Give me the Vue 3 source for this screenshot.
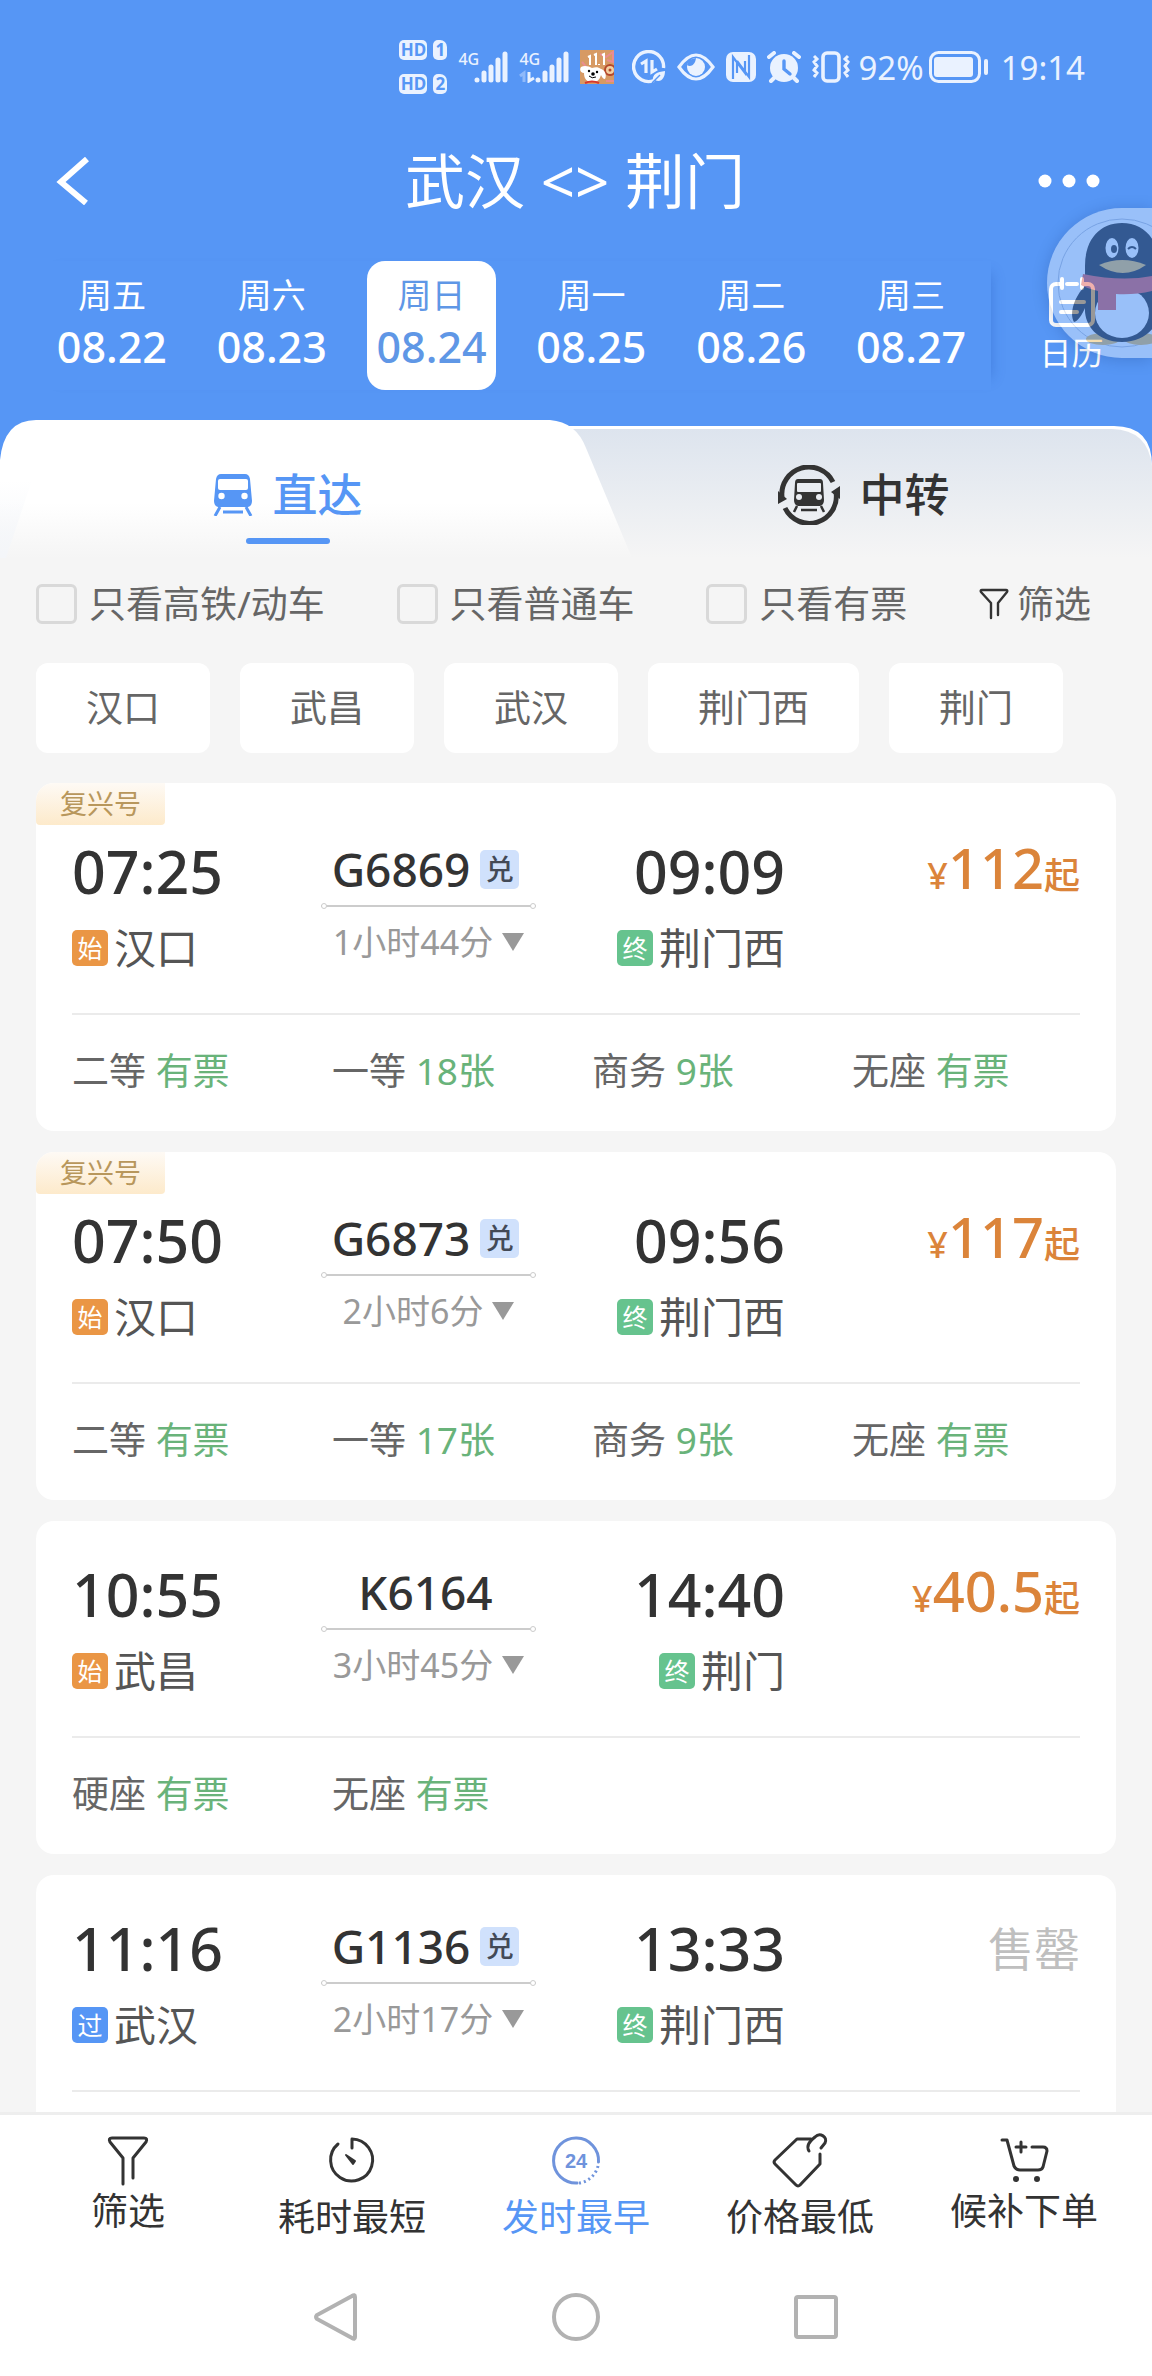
<template>
  <div class="page">
    <header class="header">
      <div class="status">
        <div class="status-group">
          <div class="hd-list">
            <div v-for="n in 2" :key="n" class="hd-row">
              <span class="hd">HD</span><span class="sim">{{ n }}</span>
            </div>
          </div>
          <div v-for="n in 2" :key="n" class="signal">
            <span class="net">4G</span>
            <svg width="50" height="32" viewBox="0 0 50 32" aria-hidden="true">
              <g stroke="#eaf2ff" stroke-width="5" stroke-linecap="round">
                <path d="M19 29v.1M26 22v7M33 16v13M40 9v20M47 3v26" />
              </g>
              <path v-if="n === 2" d="M1 25l4-3v9" fill="none" stroke="#8fb9fa" stroke-width="3" />
              <path v-if="n === 2" d="M10 21v9l5-3" fill="none" stroke="#eaf2ff" stroke-width="3" />
            </svg>
          </div>
          <svg width="34" height="34" viewBox="0 0 34 34" aria-hidden="true">
            <rect width="34" height="34" fill="#d79a64" />
            <path d="M20 4l6 3 7-5v10l-6-2M2 12l5 6M26 31h8" stroke="#ea8c8f" stroke-width="2" fill="none" />
            <path d="M8 7l2-1v9M14 5l2-1v11M19 14v1M22 5l2-1v11" stroke="#fff" stroke-width="2" fill="none" />
            <circle cx="30" cy="20" r="5" fill="#f3d0a0" stroke="#b5482c" stroke-width="2" />
            <circle cx="30" cy="20" r="1.5" fill="#b5482c" />
            <path d="M1 17c3-2 8-1 11 1 4-1 6-1 9 1 4 1 6 6 4 10-2 0-3-2-4-4-2 6-4 7-9 7s-8-3-8-9c-3 0-5-3-3-6z" fill="#fff" />
            <circle cx="9" cy="21" r="1.2" /><circle cx="17" cy="22" r="1.2" />
            <circle cx="13" cy="24" r="1.8" /><path d="M9 26q3 3 7 1" stroke="#000" fill="none" />
            <path d="M5 33q7-3 14 0" stroke="#d8352c" stroke-width="2" fill="none" />
          </svg>
        </div>

        <div class="status-group modes">
          <svg width="34" height="34" viewBox="0 0 34 34" aria-hidden="true" fill="none" stroke="#eaf2ff">
            <path d="M22 30.5A15 15 0 1 1 31.5 18" stroke-width="3.4" />
            <path d="M9 14l5-3v12M20 10v12l5-3" stroke-width="3.2" />
            <path d="M21 31c-1-7 4-9 12-10 0 7-4 12-10 9z" fill="#eaf2ff" stroke="none" />
            <path d="M20 33l8-8" stroke="#5696f5" stroke-width="1.5" />
          </svg>
          <svg width="38" height="28" viewBox="0 0 38 28" aria-hidden="true">
            <path d="M2 14Q19-10 36 14Q19 38 2 14z" fill="none" stroke="#eaf2ff" stroke-width="3.2" />
            <circle cx="19" cy="14" r="9" fill="#eaf2ff" />
            <path d="M10 12c3 2 8 1 9-7l-7 2z" fill="#5696f5" />
          </svg>
          <svg width="30" height="30" viewBox="0 0 30 30" aria-hidden="true">
            <rect width="30" height="30" rx="7" fill="#eaf2ff" />
            <path d="M7 27V5l12 16V9M11 9v12M23 3v22L11 9" fill="none" stroke="#5696f5" stroke-width="2.2" />
          </svg>
          <svg width="34" height="32" viewBox="0 0 34 32" aria-hidden="true">
            <circle cx="17" cy="17" r="14" fill="#eaf2ff" />
            <path d="M2 6l5-4M32 6l-5-4M7 27l-3 3M27 27l3 3" stroke="#eaf2ff" stroke-width="4" stroke-linecap="round" />
            <path d="M17 10v8l6 5" fill="none" stroke="#5696f5" stroke-width="3.4" stroke-linecap="round" />
          </svg>
          <svg width="38" height="32" viewBox="0 0 38 32" aria-hidden="true" fill="none" stroke="#eaf2ff">
            <rect x="11" y="2" width="16" height="28" rx="4" stroke-width="3.6" />
            <path d="M2 5l3 3-3 3 3 4-3 4 3 3-3 4M36 5l-3 3 3 3-3 4 3 4-3 3 3 4" stroke-width="3" />
          </svg>
        </div>

        <div class="status-group power">
          <span>92%</span>
          <svg width="60" height="32" viewBox="0 0 60 32" aria-hidden="true">
            <rect x="1.5" y="1.5" width="49" height="29" rx="8" fill="none" stroke="#eaf2ff" stroke-width="3" />
            <rect x="5" y="6" width="39" height="20" rx="3" fill="#eaf2ff" />
            <path d="M57 10v12" stroke="#eaf2ff" stroke-width="4" stroke-linecap="round" />
          </svg>
        </div>
        <span class="clock">19:14</span>
      </div>

      <div class="titlebar">
        <button class="icon-btn" aria-label="返回">
          <svg width="34" height="48" viewBox="0 0 34 48"><path d="M31 2L5 25l25 21" fill="none" stroke="#fff" stroke-width="6" /></svg>
        </button>
        <h1>武汉 &lt;&gt; 荆门</h1>
        <button class="icon-btn more" aria-label="更多">
          <svg width="62" height="14" viewBox="0 0 62 14" fill="#fff"><circle cx="7" cy="7" r="6.5" /><circle cx="31" cy="7" r="6.5" /><circle cx="55" cy="7" r="6.5" /></svg>
        </button>
      </div>

      <div class="dates">
        <div class="days">
          <button v-for="d in days" :key="d.date" class="day" :class="{ active: d.date === currentDate }" @click="currentDate = d.date">
            <span class="week">{{ d.week }}</span>
            <span class="date">{{ d.date }}</span>
          </button>
        </div>
        <button class="calendar">
          <svg width="46" height="50" viewBox="0 0 46 50" fill="none" stroke="#fff" stroke-linecap="round">
            <path d="M12 7H7a5 5 0 0 0-5 5v31a5 5 0 0 0 5 5h32a5 5 0 0 0 5-5V12a5 5 0 0 0-5-5h-5M18 7h10" stroke-width="4" />
            <path d="M13 2v9M33 2v9M12 25h23M12 35h16" stroke-width="4" />
          </svg>
          <span>日历</span>
        </button>
      </div>

      <svg class="floating" width="105" height="150" viewBox="0 0 105 150" aria-hidden="true">
        <path d="M105 0H75a75 75 0 0 0 0 150h30z" fill="#fff" />
        <circle cx="75" cy="75" r="64" fill="none" stroke="#a9b6cc" />
        <ellipse cx="56" cy="131" rx="17" ry="6" fill="#e7af3a" />
        <ellipse cx="94" cy="131" rx="17" ry="6" fill="#e7af3a" />
        <path d="M38 58C38 30 54 15 75 15s37 15 37 43v22c8 30-8 54-37 54-26 0-38-18-37-34-3 7-7 13-11 14-5-8 0-25 11-36z" />
        <ellipse cx="75" cy="105" rx="27" ry="25" fill="#fff" />
        <ellipse cx="65" cy="40" rx="6.5" ry="10" fill="#fff" />
        <ellipse cx="85" cy="40" rx="6.5" ry="10" fill="#fff" />
        <ellipse cx="67" cy="41" rx="3" ry="4" />
        <path d="M81 41q4-4 8 0" fill="none" stroke="#000" stroke-width="2" />
        <path d="M52 57q23-10 47 0-23 16-47 0z" fill="#e7af3a" />
        <path d="M36 66q39 8 69 2v15q-17 4-36 3v16H51V83q-12-3-17-6z" fill="#da3c34" />
      </svg>
    </header>

    <div class="tabs">
      <svg class="tabs-bg" viewBox="0 0 1152 138" preserveAspectRatio="none" aria-hidden="true">
        <defs>
          <linearGradient id="tabOff" x1="0" y1="0" x2="0" y2="1">
            <stop offset="0" stop-color="#dde4ee" />
            <stop offset="1" stop-color="#f5f5f5" />
          </linearGradient>
          <linearGradient id="tabOn" x1="0" y1="0" x2="0" y2="1">
            <stop offset=".6" stop-color="#fff" />
            <stop offset="1" stop-color="#f5f5f5" />
          </linearGradient>
          <linearGradient id="tabEdge" x1="0" y1="0" x2="0" y2="1">
            <stop offset="0" stop-color="#f4f7fb" stop-opacity="0" />
            <stop offset="1" stop-color="#f4f6f9" />
          </linearGradient>
        </defs>
        <path d="M0 45H400V6H1114Q1152 6 1152 46V138H0z" fill="#fff" />
        <path d="M400 9H1112Q1148 10 1152 46V138H400z" fill="url(#tabOff)" />
        <path d="M0 138V40Q4 0 36 0H550Q576 2 586 28L632 138z" fill="url(#tabOn)" />
        <path d="M0 60L32 60L6 138H0z" fill="url(#tabEdge)" />
      </svg>
      <button class="tab on">
        <svg width="40" height="42" viewBox="0 0 40 42">
          <path d="M8 0h24q4 0 5 5l2 22q0 5-4 6H5q-4-1-4-6L3 5q1-5 5-5z" fill="#5696f5" />
          <rect x="5" y="5" width="30" height="11" rx="2" fill="#fff" />
          <circle cx="8.5" cy="22" r="3.2" fill="#fff" /><circle cx="31.5" cy="22" r="3.2" fill="#fff" />
          <path d="M7 33l-5 9M33 33l5 9M10 38h20" stroke="#5696f5" stroke-width="3" />
        </svg>
        <span>直达</span>
      </button>
      <button class="tab">
        <svg width="62" height="60" viewBox="0 0 62 60">
          <g fill="none" stroke="#333" stroke-width="5">
            <path d="M4 32A27 27 0 0 1 55 17" />
            <path d="M58 27A27 27 0 0 1 7 43" />
          </g>
          <path d="M0 39V26l9 8zM62 21v13l-9-7z" fill="#333" />
          <path d="M20 14h22q3 0 3 4l1 17q0 5-4 6H20q-4-1-4-6l1-17q0-4 3-4z" fill="#333" />
          <rect x="19" y="18" width="24" height="9" rx="1" fill="#e9ecf1" />
          <circle cx="21" cy="32" r="3" fill="#e9ecf1" /><circle cx="41" cy="32" r="3" fill="#e9ecf1" />
          <path d="M19 41l-3 6M43 41l3 6M23 45h16" stroke="#333" stroke-width="2.5" />
        </svg>
        <span>中转</span>
      </button>
    </div>

    <div class="filters">
      <label v-for="f in filters" :key="f.label" class="check">
        <input v-model="f.checked" type="checkbox" />
        <span>{{ f.label }}</span>
      </label>
      <button class="filter-btn">
        <svg width="30" height="32" viewBox="0 0 30 32" fill="none" stroke="#333" stroke-width="2.4" stroke-linecap="round" stroke-linejoin="round">
          <path d="M12 30V15L2 4q-1-2 1-2h24q2 0 1 2L19 15v12" />
        </svg>
        <span>筛选</span>
      </button>
    </div>

    <div class="chips">
      <button v-for="s in stations" :key="s" class="chip">{{ s }}</button>
    </div>

    <main class="list">
      <article v-for="t in trains" :key="t.no" class="card" :class="{ fuxing: t.fuxing }">
        <span v-if="t.fuxing" class="ribbon">复兴号</span>
        <div class="trip">
          <div class="stop">
            <span class="time">{{ t.depart }}</span>
            <span class="station"><i class="mark" :class="t.fromType">{{ marks[t.fromType] }}</i>{{ t.from }}</span>
          </div>
          <div class="middle">
            <span class="no">{{ t.no }}<i v-if="t.exchange" class="exchange">兑</i></span>
            <span class="track"></span>
            <button class="duration">
              {{ t.duration }}
              <svg width="22" height="18" viewBox="0 0 22 18"><path d="M0 0h22L11 18z" fill="#999" /></svg>
            </button>
          </div>
          <div class="stop end">
            <span class="time">{{ t.arrive }}</span>
            <span class="station"><i class="mark final">终</i>{{ t.to }}</span>
          </div>
          <div v-if="t.price" class="price"><small>¥</small>{{ t.price }}<small>起</small></div>
          <div v-else class="sold-out">售罄</div>
        </div>
        <div class="seats">
          <span v-for="s in t.seats" :key="s[0]">{{ s[0] }} <b>{{ s[1] }}</b></span>
        </div>
      </article>
    </main>

    <footer class="footer">
      <nav class="sortbar">
        <button class="sort raised">
          <svg width="60" height="60" viewBox="0 0 60 60">
            <path d="M25 53V27L12 11q-2-4 2-4h32q4 0 2 4L35 27v20" />
          </svg>
          <span>筛选</span>
        </button>
        <button class="sort">
          <svg width="60" height="60" viewBox="0 0 60 60">
            <path d="M16 13A21 21 0 1 0 30 8v9" />
            <path d="M24 24l9 6-2 3z" fill="#333" stroke-width="2" />
          </svg>
          <span>耗时最短</span>
        </button>
        <button class="sort active">
          <svg width="60" height="60" viewBox="0 0 60 60">
            <path d="M31 52A22.5 22.5 0 1 1 52.5 31" />
            <path d="M52 35A22.5 22.5 0 0 1 33 52" stroke-dasharray="2 3" stroke-linecap="butt" />
            <text x="30" y="37" text-anchor="middle">24</text>
          </svg>
          <span>发时最早</span>
        </button>
        <button class="sort">
          <svg width="60" height="60" viewBox="0 0 60 60">
            <path d="M41 8H27L5 29q-2 2 0 4l21 21q2 2 4 0l20-21V23" />
            <path d="M39 20c-3-5 0-9 6-14 5-5 13 0 10 6l-4 5" />
          </svg>
          <span>价格最低</span>
        </button>
        <button class="sort raised">
          <svg width="60" height="60" viewBox="0 0 60 60">
            <path d="M8 9h5l7 26q2 4 6 4h18q4 0 5-3l4-16q0-4-4-4H38M22 16h10M27 11v10" />
            <circle cx="22" cy="48" r="1.5" fill="#333" /><circle cx="43" cy="48" r="1.5" fill="#333" />
          </svg>
          <span>候补下单</span>
        </button>
      </nav>
      <div class="sysnav">
        <button aria-label="后退"><svg width="48" height="50" viewBox="0 0 48 50"><path d="M43 5q0-3-3-1L5 23q-2 2 0 4l35 19q3 2 3-1z" /></svg></button>
        <button aria-label="主页"><svg width="50" height="50" viewBox="0 0 50 50"><circle cx="25" cy="25" r="22" /></svg></button>
        <button aria-label="最近任务"><svg width="46" height="46" viewBox="0 0 46 46"><rect x="3" y="3" width="40" height="40" rx="2" /></svg></button>
      </div>
    </footer>
  </div>
</template>

<script setup>
import { ref } from 'vue'

const currentDate = ref('08.24')

const days = [
  { week: '周五', date: '08.22' },
  { week: '周六', date: '08.23' },
  { week: '周日', date: '08.24' },
  { week: '周一', date: '08.25' },
  { week: '周二', date: '08.26' },
  { week: '周三', date: '08.27' }
]

const filters = ref([
  { label: '只看高铁/动车', checked: false },
  { label: '只看普通车', checked: false },
  { label: '只看有票', checked: false }
])

const stations = ['汉口', '武昌', '武汉', '荆门西', '荆门']

const marks = { start: '始', pass: '过' }

const trains = [
  {
    no: 'G6869', fuxing: true, exchange: true, depart: '07:25', from: '汉口', fromType: 'start',
    duration: '1小时44分', arrive: '09:09', to: '荆门西', price: '112',
    seats: [['二等', '有票'], ['一等', '18张'], ['商务', '9张'], ['无座', '有票']]
  },
  {
    no: 'G6873', fuxing: true, exchange: true, depart: '07:50', from: '汉口', fromType: 'start',
    duration: '2小时6分', arrive: '09:56', to: '荆门西', price: '117',
    seats: [['二等', '有票'], ['一等', '17张'], ['商务', '9张'], ['无座', '有票']]
  },
  {
    no: 'K6164', depart: '10:55', from: '武昌', fromType: 'start',
    duration: '3小时45分', arrive: '14:40', to: '荆门', price: '40.5',
    seats: [['硬座', '有票'], ['无座', '有票']]
  },
  {
    no: 'G1136', exchange: true, depart: '11:16', from: '武汉', fromType: 'pass',
    duration: '2小时17分', arrive: '13:33', to: '荆门西', price: '',
    seats: []
  }
]
</script>

<style>
body {
  margin: 0;
  background: #f5f5f5;
}
</style>

<style scoped>
.page {
  display: flex;
  flex-direction: column;
  height: 100vh;
  overflow: hidden;
  background: #f5f5f5;
  color: #333;
  font-family: "Noto Sans", "Noto Sans CJK SC", sans-serif;
}

button {
  padding: 0;
  border: none;
  background: none;
  color: inherit;
  font: inherit;
  cursor: pointer;
}

svg {
  display: block;
  flex-shrink: 0;
}

i {
  font-style: normal;
}

/* header */
.header {
  position: relative;
  flex-shrink: 0;
  padding-bottom: 30px;
  background: #5696f5;
  color: #fff;
}

.status {
  display: flex;
  align-items: center;
  justify-content: flex-end;
  height: 134px;
  padding-right: 67px;
  color: #eaf2ff;
  font-size: 33px;
}

.status-group {
  display: flex;
  align-items: center;
  gap: 11px;
}

.modes {
  margin: 0 8px 0 18px;
}

.power {
  gap: 5px;
}

.clock {
  margin-left: 12px;
}

.hd-list {
  display: flex;
  flex-direction: column;
  gap: 14px;
}

.hd-row {
  display: flex;
  gap: 6px;
  color: #5696f5;
  font-size: 17px;
  font-weight: 700;
  line-height: 20px;
  text-align: center;
}

.hd,
.sim {
  width: 28px;
  border-radius: 5px;
  background: #eaf2ff;
}

.sim {
  width: 14px;
  border-top-right-radius: 7px;
}

.signal {
  position: relative;
}

.net {
  position: absolute;
  top: 0;
  left: 0;
  font-size: 16px;
  font-weight: 500;
  line-height: 16px;
}

.titlebar {
  display: flex;
  align-items: center;
  justify-content: space-between;
  height: 94px;
  padding: 0 52px 0 56px;
}

.titlebar h1 {
  margin: 0;
  font-size: 60px;
  font-weight: 400;
  line-height: 80px;
}

.icon-btn {
  display: flex;
  width: 60px;
}

.icon-btn.more {
  justify-content: flex-end;
  width: 66px;
}

.dates {
  display: flex;
  align-items: center;
  padding: 33px 0 0 32px;
}

.days {
  display: grid;
  grid-template-columns: repeat(6, 1fr);
  flex: 1;
  justify-items: center;
  box-shadow: 12px 0 12px -12px rgba(30, 80, 180, 0.35);
}

.day {
  display: flex;
  flex-direction: column;
  align-items: center;
  width: 129px;
  height: 129px;
  padding-top: 12px;
  border-radius: 18px;
}

.day.active {
  background: #fff;
  color: #5f97e6;
}

.week {
  font-size: 34px;
  line-height: 44px;
}

.date {
  font-size: 43px;
  font-weight: 500;
  line-height: 60px;
}

.calendar {
  display: flex;
  flex-direction: column;
  align-items: center;
  gap: 4px;
  width: 161px;
  font-size: 32px;
  line-height: 44px;
}

.floating {
  position: absolute;
  top: 208px;
  right: 0;
  opacity: 0.4;
  filter: drop-shadow(0 2px 8px rgba(0, 30, 90, 0.5));
}

/* tabs */
.tabs {
  position: relative;
  display: grid;
  grid-template-columns: 1fr 1fr;
  flex-shrink: 0;
  height: 138px;
  background: linear-gradient(#5696f5 60px, #f5f5f5 60px);
}

.tabs-bg {
  position: absolute;
  inset: 0;
  width: 100%;
  height: 100%;
}

.tab {
  position: relative;
  display: flex;
  align-items: center;
  justify-content: center;
  gap: 19px;
  padding-top: 12px;
  font-size: 45px;
  font-weight: 500;
  line-height: 56px;
}

.tab.on {
  color: #5696f5;
}

.tab.on::after {
  position: absolute;
  bottom: 14px;
  left: 50%;
  width: 84px;
  height: 6px;
  margin-left: -42px;
  border-radius: 3px;
  background: #5696f5;
  content: "";
}

/* filters */
.filters {
  display: flex;
  align-items: center;
  justify-content: space-between;
  flex-shrink: 0;
  height: 92px;
  padding: 0 61px 0 36px;
  color: #666;
  font-size: 37px;
  line-height: 44px;
}

.check,
.filter-btn {
  display: flex;
  align-items: center;
  gap: 12px;
}

.filter-btn {
  gap: 8px;
}

.check input {
  width: 41px;
  height: 40px;
  margin: 0;
  border: 3px solid #d9d9d9;
  border-radius: 6px;
  appearance: none;
}

.check input:checked {
  background: #5696f5;
}

.chips {
  display: flex;
  flex-shrink: 0;
  gap: 30px;
  padding: 13px 36px 0;
}

.chip {
  height: 90px;
  padding: 0 50px;
  border-radius: 12px;
  background: #fff;
  color: #666;
  font-size: 37px;
  line-height: 44px;
}

/* train list */
.list {
  flex: 1;
  min-height: 0;
  padding: 30px 36px 0;
  overflow: hidden;
}

.card {
  position: relative;
  margin-bottom: 21px;
  padding-top: 43px;
  border-radius: 18px;
  background: #fff;
  overflow: hidden;
}

.card.fuxing {
  padding-top: 58px;
}

.ribbon {
  position: absolute;
  top: 0;
  left: 0;
  width: 129px;
  border-radius: 0 0 4px 4px;
  background: linear-gradient(#fefaf5, #fdeacb);
  color: #b8975c;
  font-size: 27px;
  line-height: 42px;
  text-align: center;
}

.trip {
  display: grid;
  grid-template-columns: 249fr 215fr 249fr 295fr;
  margin: 0 36px;
  padding-bottom: 35px;
  border-bottom: 2px solid #ebebeb;
}

.stop {
  display: flex;
  flex-direction: column;
  gap: 17px;
}

.end {
  align-items: flex-end;
}

.time {
  font-size: 59px;
  font-weight: 500;
  line-height: 60px;
}

.station {
  display: flex;
  align-items: center;
  gap: 6px;
  color: #555;
  font-size: 42px;
  line-height: 60px;
}

.mark {
  width: 36px;
  border-radius: 5px;
  color: #fff;
  font-size: 25px;
  line-height: 36px;
  text-align: center;
}

.start {
  background: #ea9645;
}

.pass {
  background: #5696f5;
}

.final {
  background: #66c38e;
}

.middle {
  display: flex;
  flex-direction: column;
  align-items: center;
}

.no {
  display: flex;
  align-items: center;
  gap: 10px;
  padding-right: 6px;
  font-size: 46px;
  font-weight: 500;
  line-height: 56px;
}

.exchange {
  width: 39px;
  border-radius: 5px;
  background: #d0e1fc;
  color: #434a57;
  font-size: 28px;
  line-height: 39px;
  text-align: center;
}

.track {
  position: relative;
  width: 100%;
  height: 2px;
  margin: 8px 0 11px;
  background: #ccc;
}

.track::before,
.track::after {
  position: absolute;
  top: -2px;
  left: 0;
  width: 4px;
  height: 4px;
  border: 1px solid #ccc;
  border-radius: 50%;
  background: #fff;
  content: "";
}

.track::after {
  right: 0;
  left: auto;
}

.duration {
  display: flex;
  align-items: center;
  gap: 9px;
  color: #999;
  font-size: 34px;
  line-height: 48px;
}

.price {
  color: #db843a;
  font-size: 56px;
  font-weight: 500;
  line-height: 52px;
  text-align: right;
}

.price small {
  font-size: 36px;
}

.sold-out {
  color: #bfbfbf;
  font-size: 46px;
  line-height: 60px;
  text-align: right;
}

.seats {
  display: grid;
  grid-template-columns: repeat(4, 1fr);
  min-height: 48px;
  padding: 32px 4px 36px 36px;
  color: #666;
  font-size: 37px;
  line-height: 48px;
}

.seats b {
  color: #69b37a;
  font-weight: 400;
}

/* footer */
.footer {
  flex-shrink: 0;
  border-top: 3px solid #eee;
  background: #fff;
}

.sortbar {
  display: grid;
  grid-template-columns: repeat(5, 1fr);
  padding: 16px 16px 21px;
}

.sort {
  display: flex;
  flex-direction: column;
  align-items: center;
  gap: 6px;
  font-size: 37px;
  line-height: 40px;
}

.sort.raised {
  gap: 0;
}

.sort svg {
  fill: none;
  stroke: #333;
  stroke-width: 3;
  stroke-linecap: round;
  stroke-linejoin: round;
}

.sort.active {
  color: #5696f5;
}

.sort.active svg {
  stroke: #6f93dc;
}

.sort text {
  fill: #6f93dc;
  stroke: none;
  font-family: "Liberation Sans", sans-serif;
  font-size: 20px;
  font-weight: 700;
}

.sysnav {
  display: flex;
  align-items: center;
  justify-content: center;
  height: 118px;
}

.sysnav button {
  display: flex;
  justify-content: center;
  width: 240px;
}

.sysnav svg {
  fill: none;
  stroke: #b2b2b2;
  stroke-width: 4;
}
</style>
